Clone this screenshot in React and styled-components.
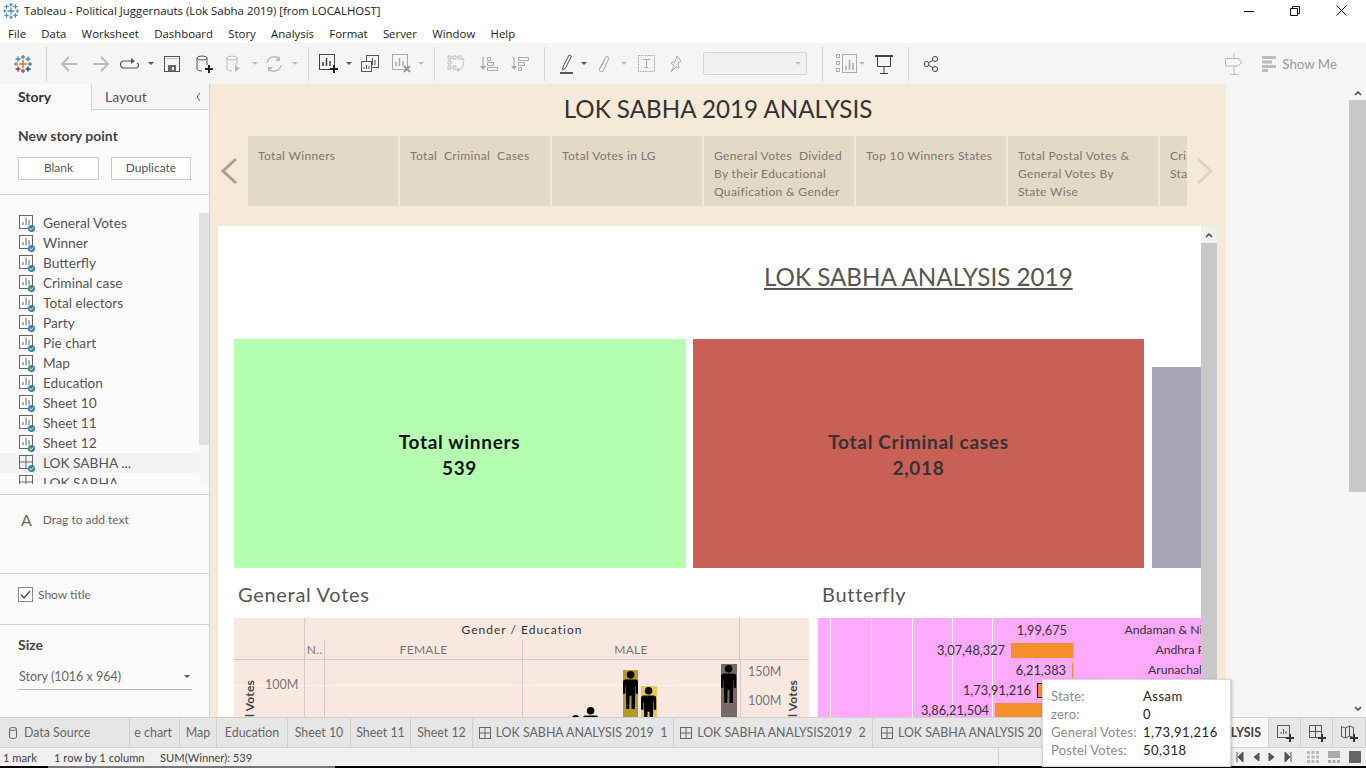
import React from 'react'
import styled, { createGlobalStyle } from 'styled-components'

const GlobalStyle = createGlobalStyle`
  html, body { margin: 0; padding: 0; background: #fff; }
  * { box-sizing: border-box; }
`

const Page = styled.div`
  position: relative;
  width: 1366px;
  height: 768px;
  overflow: hidden;
  display: flex;
  flex-direction: column;
  font-family: Lato, 'Open Sans', sans-serif;
  color: #555;
`

const TitleBar = styled.div`
  height: 23px;
  display: flex;
  align-items: center;
  padding: 0 0 2px 3px;
  gap: 5px;
  background: #fff;
  font-family: 'Open Sans', sans-serif;
  font-size: 11.4px;
  color: #222;
`
const WindowButtons = styled.div`
  margin-left: auto;
  display: flex;
  align-items: center;
  padding-right: 2px;
`
const WindowButton = styled.div`
  width: 46px;
  height: 20px;
  display: flex;
  align-items: center;
  justify-content: center;
`

const MenuBar = styled.div`
  height: 20px;
  display: flex;
  align-items: center;
  gap: 15.3px;
  padding-left: 8px;
  background: #fff;
  font-family: 'Open Sans', sans-serif;
  font-size: 11.4px;
  color: #1c1c1c;
`

const Toolbar = styled.div`
  height: 41px;
  display: flex;
  align-items: center;
  background: #f5f5f5;
`
const Cell = styled.div`
  width: ${({ $w }) => $w}px;
  margin-left: ${({ $ml }) => $ml || 0}px;
  height: 24px;
  flex: none;
  display: flex;
  align-items: center;
  justify-content: center;
`
const ToolSep = styled.div`
  width: 1px;
  height: 34px;
  flex: none;
  margin-left: ${({ $ml }) => $ml || 0}px;
  background: #d6d6d6;
`
const Caret = styled.span`
  width: 0;
  height: 0;
  flex: none;
  border-left: 3px solid transparent;
  border-right: 3px solid transparent;
  border-top: 3px solid ${({ $off }) => ($off ? '#bbb' : '#555')};
`
const Combo = styled.div`
  width: 104px;
  height: 23px;
  margin-left: 15px;
  flex: none;
  display: flex;
  align-items: center;
  justify-content: flex-end;
  padding-right: 5px;
  border: 1px solid #d4d4d4;
  border-radius: 2px;
  background: #f1f1f1;
`
const ShowMe = styled.div`
  margin-left: auto;
  display: flex;
  align-items: center;
  padding-right: 29px;
  font-size: 13.3px;
  color: #9a9a9a;
`
const ShowMeLabel = styled.span`
  margin-left: 6px;
`

const Main = styled.div`
  height: 633px;
  display: flex;
`

const Sidebar = styled.aside`
  width: 210px;
  flex: none;
  display: flex;
  flex-direction: column;
  background: #fbfbfb;
  border-right: 1px solid #d4d4d4;
`
const SideTabs = styled.div`
  height: 26px;
  display: flex;
  align-items: center;
  font-size: 14px;
`
const SideTab = styled.div`
  height: 26px;
  width: ${({ $w }) => $w}px;
  padding-left: ${({ $pl }) => $pl}px;
  line-height: 26px;
  font-weight: ${({ $active }) => ($active ? 700 : 400)};
  color: ${({ $active }) => ($active ? '#333' : '#555')};
  border-right: ${({ $active }) => ($active ? '1px solid #d4d4d4' : 'none')};
  border-bottom: ${({ $active }) => ($active ? 'none' : '1px solid #d4d4d4')};
  background: ${({ $active }) => ($active ? '#fbfbfb' : '#f5f5f5')};
`
const Collapse = styled.div`
  flex: 1;
  height: 26px;
  display: flex;
  align-items: center;
  justify-content: flex-start;
  padding-left: 3px;
  border-bottom: 1px solid #d4d4d4;
  background: #f5f5f5;
`
const SideSection = styled.section`
  height: ${({ $h }) => $h}px;
  padding: ${({ $pt }) => $pt || 0}px 0 0 18px;
  border-bottom: ${({ $open }) => ($open ? 'none' : '1px solid #cfcfcf')};
`
const SideHeading = styled.div`
  font-size: 14px;
  font-weight: 700;
  line-height: 18px;
  color: #444;
`
const ButtonRow = styled.div`
  display: flex;
  gap: 12px;
  margin-top: 12px;
`
const SideButton = styled.div`
  width: ${({ $w }) => $w}px;
  height: 23px;
  line-height: 20px;
  text-align: center;
  font-size: 12px;
  color: #555;
  background: #fff;
  border: 1px solid #ccc;
`
const ListSection = styled.section`
  height: 300px;
  padding: 18px 0 10px;
  display: flex;
  border-bottom: 1px solid #cfcfcf;
`
const SheetList = styled.div`
  flex: 1;
  height: 100%;
  overflow: hidden;
`
const SheetRow = styled.div`
  height: 20px;
  display: flex;
  align-items: center;
  gap: 8px;
  padding-left: 19px;
  font-size: 13.7px;
  color: #555;
  background: ${({ $active }) => ($active ? '#f3f3f3' : 'transparent')};
`
const SheetName = styled.span`
  margin-top: -2px;
`
const ListTrack = styled.div`
  width: 10px;
  height: 100%;
  flex: none;
  background: #f6f6f6;
`
const ListThumb = styled.div`
  height: 232px;
  background: #e1e1e1;
`
const DragHint = styled.div`
  display: flex;
  align-items: center;
  gap: 11px;
  padding-left: 3px;
  font-size: 12px;
  color: #666;
`
const BigA = styled.span`
  font-size: 16px;
  color: #666;
`
const CheckLine = styled.div`
  display: flex;
  align-items: center;
  gap: 5px;
  font-size: 12px;
  color: #666;
`
const CheckBox = styled.span`
  width: 15px;
  height: 15px;
  display: flex;
  align-items: center;
  justify-content: center;
  border: 1px solid #888;
  background: #fff;
`
const SizeSelect = styled.div`
  width: 174px;
  margin-top: 13px;
  height: 23px;
  display: flex;
  align-items: center;
  justify-content: space-between;
  padding: 0 2px 3px 1px;
  font-size: 12.5px;
  color: #666;
  border-bottom: 1px solid #bbb;
`

const StoryPane = styled.main`
  width: 1016px;
  flex: none;
  display: flex;
  flex-direction: column;
  background: #f5e9d8;
`
const StoryTitle = styled.h1`
  margin: 0;
  height: 52px;
  line-height: 50px;
  text-align: center;
  font-size: 24.2px;
  font-weight: 400;
  color: #333;
`
const StoryNav = styled.div`
  height: 70px;
  flex: none;
  display: flex;
`
const NavArrow = styled.div`
  width: ${({ $w }) => $w}px;
  flex: none;
  display: flex;
  align-items: center;
  justify-content: center;
`
const PointStrip = styled.div`
  width: 939px;
  flex: none;
  display: flex;
  gap: 2px;
  overflow: hidden;
`
const StoryPoint = styled.div`
  width: 150px;
  flex: none;
  padding: 11px 4px 0 10px;
  white-space: pre-wrap;
  font-size: 12px;
  line-height: 18px;
  letter-spacing: 0.35px;
  color: #7d776f;
  background: #e2d9c6;
`
const Dashboard = styled.div`
  flex: 1;
  min-height: 0;
  margin: 20px 9px 0 8px;
  display: flex;
  background: #fff;
`
const Canvas = styled.div`
  width: 983px;
  flex: none;
  overflow: hidden;
  padding-left: 16px;
`
const DashTitle = styled.div`
  height: 113px;
  padding: 36px 0 0 530px;
  font-size: 24.2px;
  line-height: 30px;
  text-decoration: underline;
  color: #555;
  white-space: nowrap;
`
const KpiRow = styled.div`
  height: 229px;
  display: flex;
  gap: 8px;
`
const Kpi = styled.div`
  width: ${({ $w }) => $w || 451}px;
  flex: none;
  margin-top: ${({ $mt }) => $mt || 0}px;
  display: flex;
  flex-direction: column;
  align-items: center;
  justify-content: center;
  padding-top: 2px;
  font-size: 19px;
  font-weight: 700;
  line-height: 26px;
  letter-spacing: 0.7px;
  color: ${({ $fg }) => $fg};
  background: ${({ $bg }) => $bg};
`
const ChartRow = styled.div`
  display: flex;
  gap: 9px;
  width: 2000px;
`
const ChartBlock = styled.div`
  width: ${({ $w }) => $w}px;
  flex: none;
`
const ChartName = styled.div`
  height: 50px;
  padding: 13px 0 0 4px;
  font-size: 20px;
  line-height: 26px;
  letter-spacing: 0.7px;
  color: #555;
`
const Crosstab = styled.div`
  height: 99px;
  display: grid;
  grid-template-columns: 70px 20px 198px 218px 69px;
  grid-template-rows: 22px 20px 1fr;
  overflow: hidden;
  font-size: 12px;
  background: #f9e8e0;
`
const GroupHead = styled.div`
  grid-column: 2 / 5;
  text-align: center;
  line-height: 24px;
  letter-spacing: 1px;
  color: #333;
  border-left: 1px solid #cfcac6;
  border-right: 1px solid #cfcac6;
`
const Blank = styled.div`
  grid-column: ${({ $col }) => $col};
  grid-row: ${({ $row }) => $row};
  border-bottom: ${({ $line }) => ($line ? '1px solid #cfcac6' : 'none')};
`
const ColHead = styled.div`
  border-left: 1px solid #cfcac6;
  border-bottom: 1px solid #cfcac6;
  line-height: 19px;
  text-align: center;
  letter-spacing: 0.3px;
  color: #777;
  ${({ $last }) => $last && 'border-right: 1px solid #cfcac6;'}
`
const Plot = styled.div`
  position: relative;
  border-left: ${({ $line }) => ($line ? '1px solid #cfcac6' : 'none')};
`
const GridLine = styled.div`
  position: absolute;
  left: 0;
  right: 0;
  top: 25px;
  height: 1px;
  background: #fff5f0;
`
const AxisValue = styled.span`
  position: absolute;
  left: ${({ $x }) => $x}px;
  top: ${({ $y }) => $y}px;
  font-size: 12.5px;
  line-height: 16px;
  color: #777;
`
const AxisName = styled.span`
  position: absolute;
  left: ${({ $x }) => $x}px;
  top: 20px;
  writing-mode: vertical-rl;
  transform: rotate(180deg);
  white-space: nowrap;
  font-size: 12px;
  font-weight: 700;
  line-height: 14px;
  letter-spacing: 0.2px;
  color: #444;
`
const Mark = styled.div`
  position: absolute;
  left: ${({ $x }) => $x}px;
  top: ${({ $y }) => $y}px;
  width: ${({ $w }) => $w}px;
  height: 80px;
  display: flex;
  justify-content: center;
  padding-top: 1px;
  background: ${({ $bg }) => $bg || 'transparent'};
`
const Butterfly = styled.div`
  position: relative;
  width: 600px;
  height: 99px;
  overflow: hidden;
  padding-top: 2px;
  background: #ffaaff;
`
const VLine = styled.div`
  position: absolute;
  top: 0;
  bottom: 0;
  left: ${({ $x }) => $x}px;
  width: 1px;
  background: ${({ $axis }) => ($axis ? '#d9c3c9' : '#fff')};
`
const BarRow = styled.div`
  position: relative;
  height: 20px;
  display: grid;
  grid-template-columns: 255px 250px;
  align-items: center;
  font-size: 12.8px;
  color: #333;
`
const BarSide = styled.div`
  display: flex;
  justify-content: flex-end;
  align-items: center;
  gap: 6px;
`
const Bar = styled.div`
  width: ${({ $w }) => $w}px;
  height: 15px;
  background: #f58f2c;
  ${({ $picked }) => $picked && 'border: 1px solid #111;'}
`
const StateName = styled.div`
  margin-top: -1px;
  text-align: center;
  white-space: nowrap;
  font-size: 12.2px;
`
const InnerBar = styled.div`
  width: 16px;
  flex: none;
  display: flex;
  flex-direction: column;
  background: #c8c8c8;
`
const ArrowCap = styled.div`
  height: 17px;
  flex: none;
  display: flex;
  align-items: center;
  justify-content: center;
  background: #f0f0f0;
`

const Gutter = styled.div`
  flex: 1;
  display: flex;
  justify-content: flex-end;
  background: #f5f5f5;
`
const PageScroll = styled.div`
  width: 17px;
  display: flex;
  flex-direction: column;
  padding-top: 16px;
  position: relative;
`
const PageThumb = styled.div`
  height: 392px;
  background: #c8c8c8;
`
const PageArrow = styled.div`
  position: absolute;
  left: 0;
  right: 0;
  ${({ $down }) => ($down ? 'bottom: 3px;' : 'top: 4px;')}
  height: 10px;
  display: flex;
  align-items: center;
  justify-content: center;
`

const TabBar = styled.div`
  height: 31px;
  display: flex;
  background: #e6e6e6;
  border-top: 1px solid #d0d0d0;
  border-bottom: 1px solid #d0d0d0;
`
const Tab = styled.div`
  width: ${({ $w }) => $w}px;
  flex: none;
  display: flex;
  align-items: center;
  justify-content: ${({ $j }) => $j || 'center'};
  gap: ${({ $gap }) => $gap || 5}px;
  padding: ${({ $pad }) => $pad || '0'};
  overflow: hidden;
  white-space: pre;
  font-size: 12.4px;
  color: ${({ $active }) => ($active ? '#444' : '#666')};
  font-weight: ${({ $active }) => ($active ? 700 : 400)};
  background: ${({ $active }) => ($active ? '#f8f8f8' : 'transparent')};
  border-right: 1px solid #cfcfcf;
`
const StatusBar = styled.div`
  height: 18px;
  display: flex;
  align-items: center;
  background: #f0f0f0;
  font-size: 11.2px;
  color: #444;
`
const StatusText = styled.div`
  width: 999px;
  height: 18px;
  display: flex;
  align-items: center;
  padding-left: 3px;
  border-right: 1px solid #cfcfcf;
`
const StatusItem = styled.span`
  width: ${({ $w }) => $w}px;
  flex: none;
`
const Pager = styled.div`
  margin-left: ${({ $ml }) => $ml}px;
  display: flex;
  align-items: center;
  gap: ${({ $gap }) => $gap}px;
`
const TaskStrip = styled.div`
  height: 2px;
  display: flex;
  background: #000;
`
const TaskGlow = styled.div`
  width: 287px;
  margin-left: 48px;
  background: #777;
`

const Tooltip = styled.div`
  position: absolute;
  left: 1042px;
  top: 679px;
  width: 189px;
  height: 88px;
  padding: 7px 8px 0;
  display: grid;
  grid-template-columns: 92px 1fr;
  grid-auto-rows: 18px;
  align-items: center;
  font-size: 13px;
  letter-spacing: 0.2px;
  background: #fff;
  border: 1px solid #d8d8d8;
  box-shadow: 1px 1px 3px rgba(0, 0, 0, 0.25);
`
const TipKey = styled.span`
  color: #8b8b8b;
  white-space: nowrap;
`
const TipValue = styled.span`
  color: #222;
  letter-spacing: 0.5px;
  white-space: nowrap;
`

const Svg = ({ s = 20, w, h, children }) => (
  <svg width={w || s} height={h || s} viewBox={`0 0 ${w || s} ${h || s}`} fill='none' style={{ flex: 'none', display: 'block', overflow: 'visible' }}>
    {children}
  </svg>
)

function Plus({ x, y, c = '#222' }) {
  return <path d={`M${x - 4} ${y}h8M${x} ${y - 4}v8`} stroke={c} strokeWidth='2' />
}

function LogoCross({ x, y, r, c, t = 1.4 }) {
  return <path d={`M${x - r} ${y}h${2 * r}M${x} ${y - r}v${2 * r}`} stroke={c} strokeWidth={t} />
}

function TableauLogo({ mono, size = 18 }) {
  const col = (c) => mono || c
  return (
    <svg width={size} height={size} viewBox='0 0 18 18' fill='none' style={{ flex: 'none', display: 'block' }}>
      <LogoCross x={9} y={9} r={4} c={col('#e8762b')} t={1.6} />
      <LogoCross x={9} y={2} r={2} c={col('#5b879b')} />
      <LogoCross x={9} y={16} r={2} c={col('#5b6591')} />
      <LogoCross x={2} y={9} r={2} c={col('#7099a6')} />
      <LogoCross x={16} y={9} r={2} c={col('#59879b')} />
      <LogoCross x={4} y={4} r={2.5} c={col('#3e8ba8')} />
      <LogoCross x={14} y={4} r={2.5} c={col('#5b879b')} />
      <LogoCross x={4} y={14} r={2.5} c={col('#b6293e')} />
      <LogoCross x={14} y={14} r={2.5} c={col('#1f457e')} />
    </svg>
  )
}

const ArrowLeft = ({ c = '#bbb' }) => (
  <Svg s={18}><path d='M17 9H2M9 2 2 9l7 7' stroke={c} strokeWidth='2' /></Svg>
)
const ArrowRight = ({ c = '#bbb' }) => (
  <Svg s={18}><path d='M1 9h15M9 2l7 7-7 7' stroke={c} strokeWidth='2' /></Svg>
)
const LoopIcon = () => (
  <Svg w={18} h={14}>
    <path d='M11 4H3a2.5 2.5 0 0 0 0 7h12a2.5 2.5 0 0 0 1-4.800' stroke='#555' strokeWidth='1.200' />
    <path d='M10 1l4 3-4 3z' fill='#555' />
  </Svg>
)
const SaveIcon = () => (
  <Svg s={16}>
    <rect x='.5' y='.5' width='15' height='15' stroke='#555' />
    <path d='M2 2.500h12' stroke='#bbb' />
    <rect x='4' y='9' width='8' height='6' fill='#666' />
    <rect x='8' y='11' width='2' height='3' fill='#fff' />
  </Svg>
)
const DbIcon = ({ c = '#555', plus }) => (
  <Svg w={18} h={18}>
    <ellipse cx='6' cy='3' rx='5' ry='2' stroke={c} />
    <path d='M1 3v11c0 1 2 2 5 2M11 3v7' stroke={c} />
    {plus ? <Plus x={13} y={14} /> : <path d='M9 10l5 3.500-5 3.500z' fill={c} />}
  </Svg>
)
const RefreshIcon = () => (
  <Svg s={18}>
    <path d='M2 8a7 7 0 0 1 12-4M16 10a7 7 0 0 1-12 4' stroke='#bbb' strokeWidth='1.500' />
    <path d='M15 1v5h-5zM3 17v-5h5z' fill='#bbb' />
  </Svg>
)
const NewSheetIcon = () => (
  <Svg s={20}>
    <rect x='.5' y='.5' width='15' height='15' stroke='#444' />
    <path d='M4 12V8M7.500 12V4M11 12V7' stroke='#444' strokeWidth='1.500' />
    <path d='M11 15h8M15 11v8' stroke='#222' strokeWidth='2' />
  </Svg>
)
const DupIcon = () => (
  <Svg s={18}>
    <rect x='5.500' y='.5' width='12' height='12' fill='#f5f5f5' stroke='#555' />
    <path d='M9 10V7M11.500 10V3M14 10V5' stroke='#555' />
    <rect x='.5' y='6.500' width='10' height='10' fill='#f5f5f5' stroke='#555' />
    <path d='M3 14v-2M5.500 14v-4M8 14v-3' stroke='#555' />
  </Svg>
)
const ClearIcon = () => (
  <Svg s={20}>
    <rect x='.5' y='.5' width='15' height='15' stroke='#aaa' />
    <path d='M4 12V8M7.500 12V4M11 12V7' stroke='#aaa' strokeWidth='1.500' />
    <path d='M12 12l6 6M18 12l-6 6' stroke='#999' strokeWidth='2' />
  </Svg>
)
const SwapIcon = () => (
  <Svg s={18}>
    <path d='M1 1h3v3H1zM6 1h3v3H6zM11 1h3v3h-3zM1 6h3v3H1zM1 11h3v3H1zM6 11h3v3H6z' stroke='#bbb' />
    <path d='M16 6a7 7 0 0 1-4 9' stroke='#bbb' />
    <path d='M14 5h4l-2-2zM9 15l3-2v4z' fill='#bbb' />
  </Svg>
)
const SortIcon = ({ flip }) => (
  <Svg s={18}>
    <path d='M3 2v12' stroke='#aaa' strokeWidth='1.200' />
    <path d='M0 11h6l-3 4z' fill='#aaa' />
    {flip ? (
      <path d='M7.500 2.500h10v3h-10zM7.500 7.500h6v3h-6zM7.500 12.500h3v3h-3z' stroke='#aaa' />
    ) : (
      <path d='M7.500 2.500h3v3h-3zM7.500 7.500h6v3h-6zM7.500 12.500h10v3h-10z' stroke='#aaa' />
    )}
  </Svg>
)
const PenIcon = () => (
  <Svg w={14} h={20}>
    <path d='M3 13 9 1l2.500 1.200L5.500 14l-3 2z' stroke='#555' />
    <rect x='0' y='18' width='13' height='2' fill='#555' />
  </Svg>
)
const ClipIcon = () => (
  <Svg w={12} h={18}>
    <path d='M2.500 13 7.500 2.800c1-2 4-1.200 3.200 1.200L5.500 15.200c-1.200 2.600-5 1.400-4-1.400L6.500 4' stroke='#b5b5b5' strokeWidth='1.100' />
  </Svg>
)
const TextBoxIcon = () => (
  <Svg s={17}>
    <rect x='.5' y='.5' width='16' height='16' stroke='#aaa' strokeDasharray='2 1' />
    <path d='M5 4.500h7M8.500 4.500v8M6.500 12.500h4' stroke='#aaa' />
  </Svg>
)
const PinIcon = () => (
  <Svg s={18}>
    <path d='M10 1l4 5-3 2 1 5-3-1-5 5 3-6-3-3 4-1z' stroke='#aaa' />
  </Svg>
)
const ShowMeSmall = () => (
  <Svg w={21} h={22}>
    <path d='M.5 1.500h3v3h-3zM.5 8.500h3v3h-3zM.5 15.500h3v3h-3z' stroke='#aaa' />
    <rect x='6.500' y='1.500' width='14' height='18' stroke='#aaa' />
    <path d='M10 17v-4M13.500 17V7M17 17v-7' stroke='#aaa' strokeWidth='1.500' />
  </Svg>
)
const PresentIcon = () => (
  <Svg w={18} h={20}>
    <path d='M0 2h18' stroke='#444' strokeWidth='2' />
    <rect x='2.500' y='2.500' width='13' height='10' stroke='#444' />
    <path d='M9 13v6M5 19.500h8' stroke='#444' />
  </Svg>
)
const ShareIcon = () => (
  <Svg s={16}>
    <circle cx='3.500' cy='8' r='2.500' stroke='#444' />
    <circle cx='12' cy='3' r='2.500' stroke='#444' />
    <circle cx='12' cy='13' r='2.500' stroke='#444' />
    <path d='M5.700 6.700 9.800 4.300M5.700 9.300l4.100 2.400' stroke='#444' />
  </Svg>
)
const SignIcon = () => (
  <Svg w={18} h={22}>
    <path d='M9 0v5M.5 5.500H13L17 9l-4 4H.5zM9 13v8M5 21.500h8' stroke='#bbb' />
  </Svg>
)
const ShowMeBars = () => (
  <Svg w={14} h={16}>
    <path d='M0 0h14v3H0zM0 4.500h10v3H0zM0 9h14v3H0zM0 13h6v3H0z' fill='#bbb' />
  </Svg>
)
const Chevron = ({ left, c = '#a89f90', w = 16, h = 26, t = 3 }) => (
  <Svg w={w} h={h}>
    <path d={left ? `M${w - 1} 1 2 ${h / 2}l${w - 3} ${h / 2 - 1}` : `M1 1l${w - 3} ${h / 2 - 1}L1 ${h - 1}`} stroke={c} strokeWidth={t} />
  </Svg>
)
const UpCaret = ({ down }) => (
  <Svg w={8} h={6}>
    <path d={down ? 'M1 1l3 3 3-3' : 'M1 5l3-3 3 3'} stroke='#444' strokeWidth='1.500' />
  </Svg>
)
const SheetBadge = ({ grid }) => (
  <Svg w={16} h={17}>
    <rect x='.5' y='.5' width='13' height='13' stroke='#666' />
    {grid ? (
      <path d='M7 .5v13M.5 7h13' stroke='#666' />
    ) : (
      <path d='M4 10V7M7 10V3M10 10V5' stroke='#666' />
    )}
    <circle cx='12.500' cy='13.500' r='3.500' fill='#3b83a6' />
    <path d='M10.700 13.500l1.300 1.300 2.200-2.300' stroke='#fff' />
  </Svg>
)
const Person = ({ h = 38 }) => (
  <svg width={h * 0.4} height={h} viewBox='0 0 16 40' style={{ flex: 'none' }}>
    <circle cx='8' cy='4' r='4' fill='#000' />
    <path d='M3 9h10c2 0 3 1 3 3v12h-2.500v-8h-.5l-.5 24H9V26H7l-.5 14H3.500L3 16h-.5v8H0V12c0-2 1-3 3-3z' fill='#000' />
  </svg>
)
const GridTabIcon = () => (
  <Svg s={12}>
    <rect x='.5' y='.5' width='11' height='11' stroke='#666' />
    <path d='M6 .5v11M.5 6h11' stroke='#666' />
  </Svg>
)
const BottomIcon = ({ kind }) => (
  <Svg s={18}>
    {kind === 'sheet' && <path d='M1.500 1.500h12v12h-12zM5 10V8M7.500 10V5M10 10V7' stroke='#555' />}
    {kind === 'dash' && <path d='M1.500 1.500h12v12h-12zM7.500 1.500v12M1.500 7.500h12' stroke='#555' />}
    {kind === 'story' && <path d='M1.500 2.500l4 1.500 4-2 4 1.500v10l-4-1.500-4 2-4-1.500zM5.500 4v10M9.500 2v10' stroke='#555' />}
    <path d='M10 14h8M14 10v8' stroke='#333' strokeWidth='2' />
  </Svg>
)
const PagerIcon = ({ kind }) => (
  <Svg w={8} h={10}>
    {kind === 'first' && <path d='M1 0v10M7 0v10L2 5z' stroke='#555' fill='#555' />}
    {kind === 'prev' && <path d='M7 1v8L2 5z' fill='#555' stroke='#555' />}
    {kind === 'next' && <path d='M1 1v8l5-4z' fill='#555' stroke='#555' />}
    {kind === 'last' && <path d='M7 0v10M1 0v10l5-5z' stroke='#555' fill='#555' />}
  </Svg>
)
const ViewDots = () => (
  <Svg s={12}>
    <path d='M0 0h3v3H0zM4.500 0h3v3h-3zM9 0h3v3H9zM0 4.500h3v3H0zM4.500 4.500h3v3h-3zM9 4.500h3v3H9zM0 9h3v3H0zM4.500 9h3v3h-3zM9 9h3v3H9z' fill='#bbb' />
  </Svg>
)
const ViewMid = () => (
  <Svg s={12}>
    <path d='M0 0h12v7H0zM0 9h3v3H0zM4.500 9h3v3h-3zM9 9h3v3H9z' fill='#aaa' />
  </Svg>
)
const ViewFull = () => (
  <Svg s={12}>
    <rect width='12' height='12' fill='#666' />
  </Svg>
)

const menus = ['File', 'Data', 'Worksheet', 'Dashboard', 'Story', 'Analysis', 'Format', 'Server', 'Window', 'Help']

const sheets = ['General Votes', 'Winner', 'Butterfly', 'Criminal case', 'Total electors', 'Party', 'Pie chart', 'Map', 'Education', 'Sheet 10', 'Sheet 11', 'Sheet 12']

const points = [
  'Total Winners',
  'Total  Criminal  Cases',
  'Total Votes in LG',
  'General Votes  Divided\nBy their Educational\nQuaification & Gender',
  'Top 10 Winners States',
  'Total Postal Votes &\nGeneral Votes By\nState Wise',
  'Criminal Cases\nState Wise'
]

const rows = [
  { value: '1,99,675', bar: 0, state: 'Andaman & Nicobar Islands' },
  { value: '3,07,48,327', bar: 62, state: 'Andhra Pradesh' },
  { value: '6,21,383', bar: 1, state: 'Arunachal Pradesh' },
  { value: '1,73,91,216', bar: 36, state: 'Assam', picked: true },
  { value: '3,86,21,504', bar: 78, state: 'Bihar' }
]

const lines = [12, 53, 94, 134, 174, 215]

const tabs = [
  { label: 'e chart', w: 50, j: 'flex-end', pad: '0 7px 0 0' },
  { label: 'Map', w: 37 },
  { label: 'Education', w: 71 },
  { label: 'Sheet 10', w: 63 },
  { label: 'Sheet 11', w: 60 },
  { label: 'Sheet 12', w: 62 },
  { label: 'LOK SABHA ANALYSIS 2019  1', w: 201, grid: true },
  { label: 'LOK SABHA ANALYSIS2019  2', w: 199, grid: true },
  { label: 'LOK SABHA ANALYSIS 2019  3', w: 202, grid: true, j: 'flex-start', pad: '0 0 0 8px' }
]

const tips = [
  ['State:', 'Assam'],
  ['zero:', '0'],
  ['General Votes:', '1,73,91,216'],
  ['Postel Votes:', '50,318']
]

export default function App() {
  return (
    <Page>
      <GlobalStyle />
      <TitleBar>
        <TableauLogo mono='#4a90c0' size={16} />
        Tableau - Political Juggernauts (Lok Sabha 2019) [from LOCALHOST]
        <WindowButtons>
          <WindowButton>
            <Svg w={10} h={10}><path d='M0 5.500h10' stroke='#111' /></Svg>
          </WindowButton>
          <WindowButton>
            <Svg w={10} h={10}>
              <path d='M2.500 2.500V.5h7v7h-2M.5 2.500h7v7h-7z' stroke='#111' />
            </Svg>
          </WindowButton>
          <WindowButton>
            <Svg w={11} h={11}><path d='M.5.5l10 10M10.500.5l-10 10' stroke='#111' /></Svg>
          </WindowButton>
        </WindowButtons>
      </TitleBar>
      <MenuBar>
        {menus.map((m) => (
          <span key={m}>{m}</span>
        ))}
      </MenuBar>
      <Toolbar>
        <Cell $w={46}><TableauLogo /></Cell>
        <ToolSep />
        <Cell $w={44}><ArrowLeft /></Cell>
        <Cell $w={20}><ArrowRight /></Cell>
        <Cell $w={38}><LoopIcon /></Cell>
        <Cell $w={4}><Caret /></Cell>
        <Cell $w={38}><SaveIcon /></Cell>
        <Cell $w={28}><DbIcon plus /></Cell>
        <Cell $w={32}><DbIcon c='#bbb' /></Cell>
        <Cell $w={8}><Caret $off /></Cell>
        <Cell $w={30}><RefreshIcon /></Cell>
        <Cell $w={12}><Caret $off /></Cell>
        <ToolSep $ml={7} />
        <Cell $w={36} $ml={2}><NewSheetIcon /></Cell>
        <Cell $w={4}><Caret /></Cell>
        <Cell $w={38}><DupIcon /></Cell>
        <Cell $w={26}><ClearIcon /></Cell>
        <Cell $w={12}><Caret $off /></Cell>
        <ToolSep $ml={7} />
        <Cell $w={42}><SwapIcon /></Cell>
        <Cell $w={24}><SortIcon /></Cell>
        <Cell $w={38}><SortIcon flip /></Cell>
        <ToolSep $ml={5} />
        <Cell $w={26} $ml={9}><PenIcon /></Cell>
        <Cell $w={8}><Caret /></Cell>
        <Cell $w={32}><ClipIcon /></Cell>
        <Cell $w={8}><Caret $off /></Cell>
        <Cell $w={36}><TextBoxIcon /></Cell>
        <Cell $w={24}><PinIcon /></Cell>
        <Combo><Caret $off /></Combo>
        <ToolSep $ml={15} />
        <Cell $w={24} $ml={11}><ShowMeSmall /></Cell>
        <Cell $w={8}><Caret $off /></Cell>
        <Cell $w={36}><PresentIcon /></Cell>
        <ToolSep $ml={6} />
        <Cell $w={44}><ShareIcon /></Cell>
        <ShowMe>
          <Cell $w={18}><SignIcon /></Cell>
          <Cell $w={14} $ml={19}><ShowMeBars /></Cell>
          <ShowMeLabel>Show Me</ShowMeLabel>
        </ShowMe>
      </Toolbar>
      <Main>
        <Sidebar>
          <SideTabs>
            <SideTab $active $w={92} $pl={18}>Story</SideTab>
            <SideTab $w={100} $pl={13}>Layout</SideTab>
            <Collapse><Chevron left c='#666' w={6} h={10} t={1} /></Collapse>
          </SideTabs>
          <SideSection $h={85} $pt={17}>
            <SideHeading>New story point</SideHeading>
            <ButtonRow>
              <SideButton $w={81}>Blank</SideButton>
              <SideButton $w={80}>Duplicate</SideButton>
            </ButtonRow>
          </SideSection>
          <ListSection>
            <SheetList>
              {sheets.map((s) => (
                <SheetRow key={s}>
                  <SheetBadge />
                  <SheetName>{s}</SheetName>
                </SheetRow>
              ))}
              <SheetRow $active>
                <SheetBadge grid />
                <SheetName>LOK SABHA ...</SheetName>
              </SheetRow>
              <SheetRow>
                <SheetBadge grid />
                <SheetName>LOK SABHA ...</SheetName>
              </SheetRow>
            </SheetList>
            <ListTrack><ListThumb /></ListTrack>
          </ListSection>
          <SideSection $h={79} $pt={15}>
            <DragHint>
              <BigA>A</BigA>
              Drag to add text
            </DragHint>
          </SideSection>
          <SideSection $h={51} $pt={13}>
            <CheckLine>
              <CheckBox>
                <Svg w={11} h={9}><path d='M1 4.500 4 8l6-7' stroke='#444' strokeWidth='1.200' /></Svg>
              </CheckBox>
              Show title
            </CheckLine>
          </SideSection>
          <SideSection $open $pt={11}>
            <SideHeading>Size</SideHeading>
            <SizeSelect>
              Story (1016 x 964)
              <Caret $off={false} />
            </SizeSelect>
          </SideSection>
        </Sidebar>
        <StoryPane>
          <StoryTitle>LOK SABHA 2019 ANALYSIS</StoryTitle>
          <StoryNav>
            <NavArrow $w={38}><Chevron left /></NavArrow>
            <PointStrip>
              {points.map((p) => (
                <StoryPoint key={p}>{p}</StoryPoint>
              ))}
            </PointStrip>
            <NavArrow $w={35}><Chevron c='#dcd3c4' /></NavArrow>
          </StoryNav>
          <Dashboard>
            <Canvas>
              <DashTitle>LOK SABHA ANALYSIS 2019</DashTitle>
              <KpiRow>
                <Kpi $bg='#b5ffb0' $fg='#111'>
                  <span>Total winners</span>
                  <span>539</span>
                </Kpi>
                <Kpi $bg='#c96055' $fg='#333'>
                  <span>Total Criminal cases</span>
                  <span>2,018</span>
                </Kpi>
                <Kpi $w={451} $mt={28} $bg='#a9a4b6' $fg='#333' />
              </KpiRow>
              <ChartRow>
                <ChartBlock $w={575}>
                  <ChartName>General Votes</ChartName>
                  <Crosstab>
                    <Blank $col={1} $row={1} />
                    <GroupHead>Gender / Education</GroupHead>
                    <Blank $col={5} $row={1} />
                    <Blank $col={1} $row={2} $line />
                    <ColHead>N..</ColHead>
                    <ColHead>FEMALE</ColHead>
                    <ColHead $last>MALE</ColHead>
                    <Blank $col={5} $row={2} $line />
                    <Plot>
                      <GridLine />
                      <AxisName $x={9}>General Votes</AxisName>
                      <AxisValue $x={31} $y={17}>100M</AxisValue>
                    </Plot>
                    <Plot $line><GridLine /></Plot>
                    <Plot $line><GridLine /></Plot>
                    <Plot $line>
                      <GridLine />
                      <Mark $x={46} $y={54} $w={14}><Person /></Mark>
                      <Mark $x={60} $y={46} $w={16}><Person /></Mark>
                      <Mark $x={100} $y={10} $w={15} $bg='#b5972a'><Person /></Mark>
                      <Mark $x={118} $y={26} $w={16} $bg='#e8c65a'><Person /></Mark>
                      <Mark $x={198} $y={4} $w={16} $bg='#77696a'><Person /></Mark>
                    </Plot>
                    <Plot $line>
                      <AxisValue $x={7} $y={4}>150M</AxisValue>
                      <AxisValue $x={7} $y={33}>100M</AxisValue>
                      <AxisName $x={45}>General Votes</AxisName>
                    </Plot>
                  </Crosstab>
                </ChartBlock>
                <ChartBlock $w={600}>
                  <ChartName>Butterfly</ChartName>
                  <Butterfly>
                    {lines.map((x) => (
                      <VLine key={x} $x={x} />
                    ))}
                    <VLine $x={255} $axis />
                    {rows.map((r) => (
                      <BarRow key={r.state}>
                        <BarSide>
                          {r.value}
                          <Bar $w={r.bar} $picked={r.picked} />
                        </BarSide>
                        <StateName>{r.state}</StateName>
                      </BarRow>
                    ))}
                  </Butterfly>
                </ChartBlock>
              </ChartRow>
            </Canvas>
            <InnerBar>
              <ArrowCap><UpCaret /></ArrowCap>
            </InnerBar>
          </Dashboard>
        </StoryPane>
        <Gutter>
          <PageScroll>
            <PageArrow><UpCaret /></PageArrow>
            <PageThumb />
            <PageArrow $down><UpCaret down /></PageArrow>
          </PageScroll>
        </Gutter>
      </Main>
      <TabBar>
        <Tab $w={130} $j='flex-start' $pad='0 0 0 9px' $gap={7}>
          <Svg w={8} h={12}>
            <ellipse cx='4' cy='2' rx='3.500' ry='1.500' stroke='#666' />
            <path d='M.5 2v8c0 2 7 2 7 0V2' stroke='#666' />
          </Svg>
          Data Source
        </Tab>
        {tabs.map((t) => (
          <Tab key={t.label} $w={t.w} $j={t.j} $pad={t.pad}>
            {t.grid && <GridTabIcon />}
            {t.label}
          </Tab>
        ))}
        <Tab $w={194} $j='flex-end' $pad='0 7px 0 0' $active>LOK SABHA 2019 ANALYSIS</Tab>
        <Tab $w={32}><BottomIcon kind='sheet' /></Tab>
        <Tab $w={32}><BottomIcon kind='dash' /></Tab>
        <Tab $w={33}><BottomIcon kind='story' /></Tab>
      </TabBar>
      <StatusBar>
        <StatusText>
          <StatusItem $w={51}>1 mark</StatusItem>
          <StatusItem $w={106}>1 row by 1 column</StatusItem>
          <StatusItem $w={110}>SUM(Winner): 539</StatusItem>
        </StatusText>
        <Pager $ml={237} $gap={8}>
          <PagerIcon kind='first' />
          <PagerIcon kind='prev' />
          <PagerIcon kind='next' />
          <PagerIcon kind='last' />
        </Pager>
        <Pager $ml={15} $gap={9}>
          <ViewDots />
          <ViewMid />
          <ViewFull />
        </Pager>
      </StatusBar>
      <TaskStrip><TaskGlow /></TaskStrip>
      <Tooltip>
        {tips.map(([k, v]) => (
          <React.Fragment key={k}>
            <TipKey>{k}</TipKey>
            <TipValue>{v}</TipValue>
          </React.Fragment>
        ))}
      </Tooltip>
    </Page>
  )
}
